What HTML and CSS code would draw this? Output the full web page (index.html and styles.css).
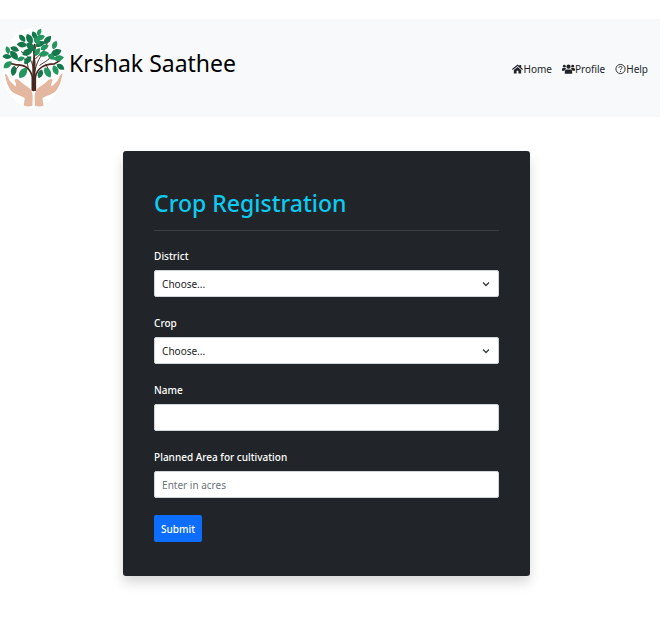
FILE: index.html
```html
<!DOCTYPE html>
<html lang="en">
<head>
<meta charset="utf-8">
<meta name="viewport" content="width=device-width, initial-scale=1">
<title>Krshak Saathee</title>
<link rel="stylesheet" href="styles.css">
</head>
<body>
<header class="navbar">
  <a class="brand" href="#">
    <svg class="logo" viewBox="0 36 195 249" aria-hidden="true">
      <defs><path id="leaf" d="M-17 0C-9-13 7-14 18 0C8 12-8 12-17 0Z"/></defs>
      <ellipse cx="98" cy="160" rx="93" ry="122" fill="#fff"/>
      <g fill="none" stroke="#49291f" stroke-linecap="round">
        <path d="M101 228V165L104 90" stroke-width="6"/>
        <path d="M97 228V188C92 165 76 150 48 151L28 146" stroke-width="5"/>
        <path d="M106 228V190C111 160 130 149 164 148L180 138" stroke-width="5"/>
        <path d="M102 182C100 140 89 125 64 111M84 160C83 142 77 130 63 130M103 120L91 80M104 105L120 67M105 170C111 130 132 120 143 82M120 152C136 139 150 140 163 108M58 151L40 174M138 149L151 175M104 135L128 112" stroke-width="3"/>
      </g>
      <path d="M102 138V230" stroke="#49291f" stroke-width="9"/>
      <g fill="#16764b">
        <use href="#leaf" transform="translate(103 61) rotate(65) scale(.75)"/>
        <use href="#leaf" transform="translate(88 73) rotate(65)"/>
        <use href="#leaf" transform="translate(66 70) rotate(50) scale(.8)"/>
        <use href="#leaf" transform="translate(65 90) rotate(5) scale(.9)"/>
        <use href="#leaf" transform="translate(92 97) rotate(40)"/>
        <use href="#leaf" transform="translate(43 103) rotate(20) scale(.8)"/>
        <use href="#leaf" transform="translate(82 113) rotate(-25)"/>
        <use href="#leaf" transform="translate(41 122) rotate(50)"/>
        <use href="#leaf" transform="translate(20 126) rotate(5) scale(.8)"/>
        <use href="#leaf" transform="translate(83 137) rotate(-50) scale(.9)"/>
        <use href="#leaf" transform="translate(40 169) rotate(100) scale(.9)"/>
        <use href="#leaf" transform="translate(143 76) rotate(-50) scale(.9)"/>
        <use href="#leaf" transform="translate(121 88) rotate(-25) scale(.9)"/>
        <use href="#leaf" transform="translate(169 114) rotate(-25)"/>
        <use href="#leaf" transform="translate(121 178) rotate(110) scale(.8)"/>
        <use href="#leaf" transform="translate(182 157) rotate(35) scale(.8)"/>
      </g>
      <g fill="#25965f">
        <use href="#leaf" transform="translate(118 52) rotate(-65) scale(.65)"/>
        <use href="#leaf" transform="translate(120 69) rotate(-20) scale(.9)"/>
        <use href="#leaf" transform="translate(111 79) rotate(45) scale(.8)"/>
        <use href="#leaf" transform="translate(22 106) rotate(75) scale(.7)"/>
        <use href="#leaf" transform="translate(62 133) rotate(-20) scale(.7)"/>
        <use href="#leaf" transform="translate(22 151) rotate(-40) scale(.9)"/>
        <use href="#leaf" transform="translate(69 176) rotate(-55) scale(1.1)"/>
        <use href="#leaf" transform="translate(134 98) rotate(-30) scale(.8)"/>
        <use href="#leaf" transform="translate(112 112) rotate(-60) scale(.8)"/>
        <use href="#leaf" transform="translate(132 118) rotate(-10) scale(.9)"/>
        <use href="#leaf" transform="translate(155 127) rotate(30) scale(.8)"/>
        <use href="#leaf" transform="translate(165 91) rotate(-70) scale(.8)"/>
        <use href="#leaf" transform="translate(177 131) rotate(-10) scale(.9)"/>
        <use href="#leaf" transform="translate(143 174) rotate(60)"/>
        <use href="#leaf" transform="translate(167 167) rotate(65) scale(.9)"/>
      </g>
      <g fill="#e4b7a0">
        <path id="hand" d="M13 178C19 177 23 187 29 200L45 216C51 214 46 205 43 197C47 190 56 196 65 205L88 222C96 229 98 238 98 250L97 275C89 278 79 278 71 274L74 252C64 245 49 243 35 232C23 220 18 200 13 178Z"/>
        <use href="#hand" transform="matrix(-1 0 0 1 202 0)"/>
      </g>
    </svg>
    <span class="brand-name">Krshak Saathee</span>
  </a>
  <nav class="links" aria-label="Main">
    <a href="#"><svg class="icon" viewBox="0 0 12 12" aria-hidden="true"><path d="M0 6L6 1L8 2.700V1.500H10V4.400L12 6L11.200 7L6 2.800L.8 7Z"/><path d="M2 7L6 3.800L10 7V11H7V8H5V11H2Z"/></svg>Home</a>
    <a href="#"><svg class="icon icon-wide" viewBox="0 0 14 12" aria-hidden="true"><circle cx="7" cy="3.500" r="2.300"/><circle cx="2.500" cy="3" r="1.500"/><circle cx="11.500" cy="3" r="1.500"/><path d="M3 11V9Q3 6.500 5 6.500H9Q11 6.500 11 9V11ZM0 8V6.500Q0 5 1.500 5H3.800L4.500 6Q3 6.500 2.500 8ZM14 8V6.500Q14 5 12.500 5H10.200L9.500 6Q11 6.500 11.500 8Z"/></svg>Profile</a>
    <a href="#"><svg class="icon icon-line" viewBox="0 0 12 12" aria-hidden="true"><circle cx="6" cy="6" r="5"/><path d="M4.300 4.800C4.300 2.600 7.700 2.600 7.700 4.600C7.700 5.800 6 5.800 6 7.200M6 8.200V9.300"/></svg>Help</a>
  </nav>
</header>
<main class="page">
  <form class="card">
    <h1>Crop Registration</h1>
    <div class="field">
      <label for="district">District</label>
      <select id="district"><option>Choose...</option></select>
    </div>
    <div class="field">
      <label for="crop">Crop</label>
      <select id="crop"><option>Choose...</option></select>
    </div>
    <div class="field">
      <label for="name">Name</label>
      <input id="name" type="text">
    </div>
    <div class="field">
      <label for="area">Planned Area for cultivation</label>
      <input id="area" type="text" placeholder="Enter in acres">
    </div>
    <button type="submit">Submit</button>
  </form>
</main>
</body>
</html>
```
FILE: styles.css
```css
* {
  box-sizing: border-box;
}

body {
  margin: 19px 4px 0 0;
  background: #fff;
  color: #212529;
  font: 10px/18px "Noto Sans", "Open Sans", sans-serif;
}

.navbar {
  display: flex;
  align-items: center;
  justify-content: space-between;
  padding: 8px 12px 8px 0;
  background: #f8f9fa;
}

.brand {
  display: flex;
  gap: 4px;
  color: #000;
  text-decoration: none;
}

.logo {
  width: 65px;
  height: 82px;
}

.brand-name {
  padding-top: 18px;
  font-size: 23px;
  line-height: 36px;
}

.links {
  display: flex;
  gap: 10px;
  padding-top: 2px;
}

.links a {
  display: flex;
  align-items: center;
  color: #212529;
  text-decoration: none;
}

.icon {
  width: 11px;
  height: 12px;
  fill: #212529;
}

.icon-wide {
  width: 13px;
}

.icon-line {
  fill: none;
  stroke: #212529;
}

.page {
  display: flex;
  justify-content: center;
  padding: 34px 7px 40px 0;
}

.card {
  width: 62.3%;
  padding: 32px 31px 34px;
  border-radius: 3px;
  background: #212529;
  color: #fff;
  box-shadow: 0 7px 12px rgb(0 0 0 / 15%);
}

h1 {
  margin: 0 0 16px;
  padding-bottom: 7px;
  border-bottom: 1px solid #3c4043;
  color: #0dcaf0;
  font-size: 23px;
  font-weight: 500;
  line-height: 40px;
}

.field {
  margin-bottom: 17px;
}

label {
  display: block;
  margin-bottom: 5px;
  font-weight: 500;
}

input,
select {
  display: block;
  width: 100%;
  height: 27px;
  padding: 3px 7px;
  border: 1px solid #ced4da;
  border-radius: 2px;
  background: #fff;
  color: #212529;
  font: inherit;
}

input::placeholder {
  color: #6c757d;
  opacity: 1;
}

select {
  appearance: none;
  background: #fff url("data:image/svg+xml,%3Csvg xmlns='http://www.w3.org/2000/svg' viewBox='0 0 8 8'%3E%3Cpath d='M1 2.500L4 5.500L7 2.500' fill='none' stroke='%23343a40' stroke-width='1.300'/%3E%3C/svg%3E") no-repeat right 8px center / 8px 8px;
}

button {
  display: block;
  height: 27px;
  padding: 3px 7px;
  border: 0;
  border-radius: 2px;
  background: #0d6efd;
  color: #fff;
  font: inherit;
  font-weight: 500;
}
```
